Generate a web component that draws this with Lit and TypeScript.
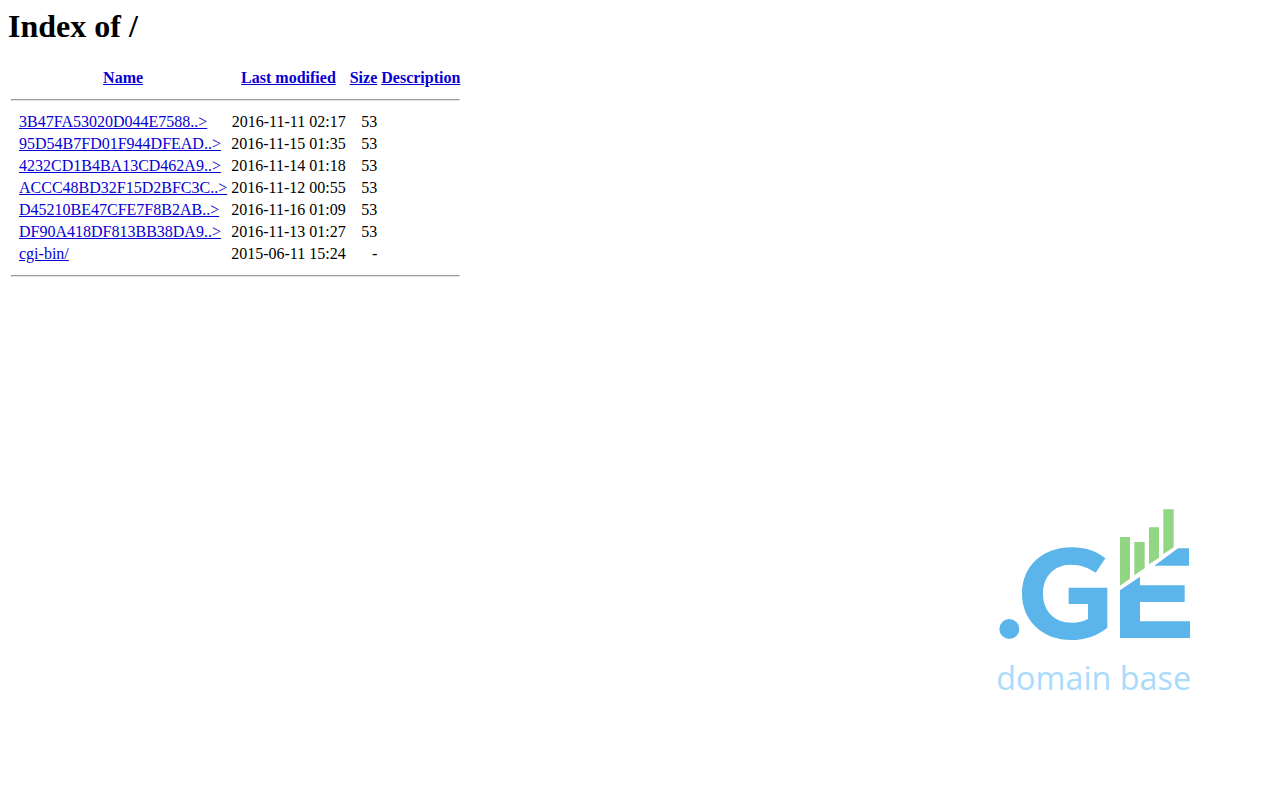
import { LitElement, html, css } from "lit";
import { customElement } from "lit/decorators.js";

interface Entry {
  name: string;
  modified: string;
  size: string;
}

const entries: Entry[] = [
  { name: "3B47FA53020D044E7588..>", modified: "2016-11-11 02:17", size: "53" },
  { name: "95D54B7FD01F944DFEAD..>", modified: "2016-11-15 01:35", size: "53" },
  { name: "4232CD1B4BA13CD462A9..>", modified: "2016-11-14 01:18", size: "53" },
  { name: "ACCC48BD32F15D2BFC3C..>", modified: "2016-11-12 00:55", size: "53" },
  { name: "D45210BE47CFE7F8B2AB..>", modified: "2016-11-16 01:09", size: "53" },
  { name: "DF90A418DF813BB38DA9..>", modified: "2016-11-13 01:27", size: "53" },
  { name: "cgi-bin/", modified: "2015-06-11 15:24", size: "-" },
];

@customElement("domain-logo")
export class DomainLogo extends LitElement {
  static styles = css`
    :host {
      display: block;
    }
    .logo {
      display: block;
      width: 230px;
      height: 200px;
    }
    .blue {
      fill: #5cb5ea;
    }
    .green {
      fill: #92d583;
    }
    .caption {
      fill: #a9dbfb;
      font-family: "Open Sans", "Noto Sans", sans-serif;
      font-size: 97px;
    }
  `;

  render() {
    return html`
      <svg class="logo" viewBox="0 0 690 600" role="img" aria-label=".GE domain base">
        <circle class="blue" cx="88" cy="387" r="30" />
        <path
          class="blue"
          d="M376 175 L347 218 C325 203 303 194 272 194 C222 194 189 230 189 281 C189 333 223 368 276 368 C295 368 311 364 324 357 V312 H266 V263 H382 V383 C353 407 315 420 274 420 C188 420 126 362 126 281 C126 198 188 142 275 142 C316 142 349 153 376 175 Z"
        />
        <path class="blue" d="M420 271 L480 230 V256 H614 V306 H480 V364 H630 V414 H420 Z" />
        <path class="blue" d="M523 197 L594 145 H627 V197 Z" />
        <path class="green" d="M420 111 H450 V236 L420 257 Z" />
        <path class="green" d="M463 126 H494 V205 L463 226 Z" />
        <path class="green" d="M507 82 H537 V173 L507 193 Z" />
        <path class="green" d="M550 28 H581 V142 L550 162 Z" />
        <text class="caption" x="49" y="571">domain base</text>
      </svg>
    `;
  }
}

@customElement("app-root")
export class AppRoot extends LitElement {
  static styles = css`
    :host {
      display: flex;
      justify-content: space-between;
      box-sizing: border-box;
      min-height: 100vh;
      padding: 8px;
      background: #fff;
      color: #000;
      font-family: "Liberation Serif", "Times New Roman", serif;
      font-size: 16px;
      line-height: 18px;
    }
    .title {
      margin: 0 0 21px;
      font-size: 32px;
      line-height: 37px;
    }
    .listing {
      border-spacing: 2px;
    }
    .listing th,
    .listing td {
      padding: 1px;
      white-space: nowrap;
    }
    .listing .number {
      text-align: right;
    }
    .rule {
      margin: 8px 0;
      border: 1px solid;
      border-color: #9a9a9a #e6e6e6 #e6e6e6 #9a9a9a;
    }
    a {
      color: #0800d2;
      text-decoration: underline;
    }
    .brand {
      align-self: flex-end;
      margin: 0 62px 92px 0;
    }
  `;

  private renderRule() {
    return html`<tr>
      <th colspan="5"><hr class="rule" /></th>
    </tr>`;
  }

  render() {
    return html`
      <main>
        <h1 class="title">Index of /</h1>
        <table class="listing">
          <thead>
            <tr>
              <th>&nbsp;</th>
              <th><a href="?C=N;O=D">Name</a></th>
              <th><a href="?C=M;O=A">Last modified</a></th>
              <th><a href="?C=S;O=A">Size</a></th>
              <th><a href="?C=D;O=A">Description</a></th>
            </tr>
            ${this.renderRule()}
          </thead>
          <tbody>
            ${entries.map(
              (entry) => html`<tr>
                <td>&nbsp;</td>
                <td><a href="#${entry.name}">${entry.name}</a></td>
                <td class="number">${entry.modified}</td>
                <td class="number">${entry.size}</td>
                <td>&nbsp;</td>
              </tr>`
            )}
            ${this.renderRule()}
          </tbody>
        </table>
      </main>
      <domain-logo class="brand"></domain-logo>
    `;
  }
}
